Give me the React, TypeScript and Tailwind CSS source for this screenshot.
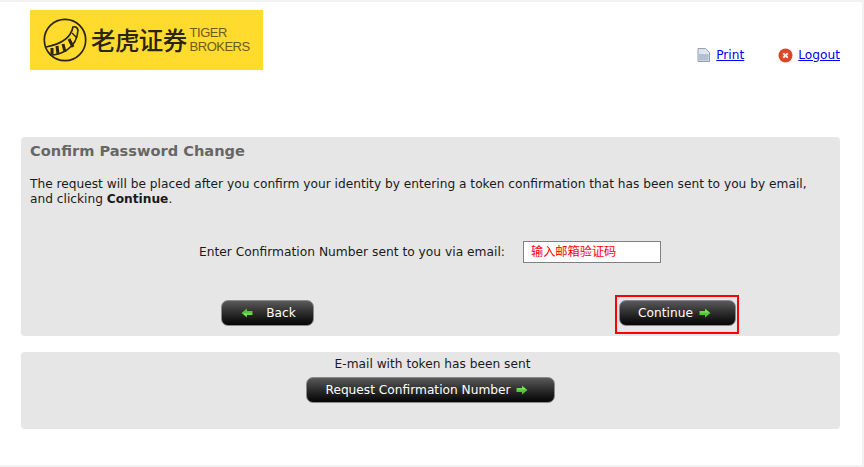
const font = "font-['DejaVu_Sans','Noto_Sans_CJK_SC',sans-serif]";

function GreenArrow({ left = false }: { left?: boolean }) {
    return (
        <svg width="12" height="10" viewBox="0 0 12 10" className={left ? 'rotate-180' : ''}>
            <path d="M0.5 3 H6 V0.5 L11.5 5 L6 9.5 V7 H0.5 Z" fill="#52c934" />
            <path d="M1 3.5 H6.5 V1.6 L10 4.6 H1 Z" fill="#86e863" />
        </svg>
    );
}

function DarkButton({ children, className }: { children: React.ReactNode; className: string }) {
    return (
        <button
            type="button"
            className={`flex h-[26px] items-center justify-center rounded-[7px] border border-[#8a8a8a] bg-gradient-to-b from-[#5a5a5a] to-[#060606] text-[12.2px] font-medium text-white ${className}`}
        >
            {children}
        </button>
    );
}

function TigerMark() {
    return (
        <svg width="44" height="44" viewBox="0 0 44 44" fill="none" stroke="#2b2410" strokeWidth="1.7">
            <circle cx="22" cy="22" r="20.7" />
            <path d="M7 37 C17 37 34 31 35 12 Q34 8 30 9 C28 19 19 26 3 29" strokeWidth="1.6" />
            <path d="M9 30 L9 36 M14 28 L15 36 M20 26 L22 34 M26 21 L30 29" strokeWidth="3" />
            <path d="M29 15 L34 20" strokeWidth="1.4" />
        </svg>
    );
}

export default function App() {
    return (
        <div className={`flex h-[467px] w-[864px] flex-col overflow-hidden border-t-2 border-r-2 border-b-2 border-[#f2f2f2] bg-white text-[12.2px] leading-[16px] text-[#1a1a1a] ${font}`}>
            <header className="flex h-[135px] items-start justify-between pl-[30px] pr-[22px] pt-2">
                <div className="flex h-[60px] w-[233px] items-center bg-[#fedb2d] pl-[13px] text-[#2b2410]">
                    <TigerMark />
                    <span className="ml-[4px] font-['Noto_Sans_CJK_SC',sans-serif] text-[24.5px] leading-none font-medium tracking-[-0.6px]">老虎证券</span>
                    <span className="ml-[3px] font-['Liberation_Sans',sans-serif] text-[13px] leading-[14px] tracking-[-0.5px] text-[#6b5c1a]">
                        TIGER
                        <br />
                        BROKERS
                    </span>
                </div>
                <nav className="mt-[37px] flex items-center gap-[34px]">
                    <a href="#" className="flex items-center gap-[6px] text-[#0000ee] underline">
                        <svg width="13" height="14" viewBox="0 0 13 14">
                            <path d="M1 0.5 H8.5 L12.5 4.5 V13.5 H1 Z" fill="#dfe5ee" stroke="#95a1b0" />
                            <path d="M2 6 H11.5 V12.5 H2 Z" fill="#b3c0d2" />
                        </svg>
                        Print
                    </a>
                    <a href="#" className="flex items-center gap-[5px] text-[#0000ee] underline">
                        <svg width="15" height="15" viewBox="0 0 15 15">
                            <circle cx="7.5" cy="7.5" r="7" fill="#dc4526" />
                            <path d="M5.2 5.2 L9.8 9.8 M9.8 5.2 L5.2 9.8" stroke="#ffe9e0" strokeWidth="2" />
                        </svg>
                        Logout
                    </a>
                </nav>
            </header>

            <main className="flex flex-col gap-4 pl-[21px] pr-[22px]">
                <section className="flex h-[199px] flex-col rounded-[4px] bg-[#e6e6e6] px-[9px] pt-[5px]">
                    <h1 className="text-[14.6px] leading-[17px] font-bold text-[#666666]">Confirm Password Change</h1>
                    <p className="mt-[18px] leading-[15px]">
                        The request will be placed after you confirm your identity by entering a token confirmation that has been sent to you by email,
                        <br />
                        and clicking <b>Continue</b>.
                    </p>
                    <div className="mt-[34px] flex h-[22px] items-center pl-[169px]">
                        <label className="w-[306px] text-[12.25px] whitespace-nowrap">Enter Confirmation Number sent to you via email:</label>
                        <div className="ml-[18px] flex h-[22px] w-[138px] items-center border border-[#808080] bg-white pl-[7px] text-[#ff0000]">输入邮箱验证码</div>
                    </div>
                    <div className="mt-[37px] flex items-start justify-between pl-[191px] pr-[92px]">
                        <DarkButton className="w-[93px] gap-[13px] pl-[2px]">
                            <GreenArrow left />
                            Back
                        </DarkButton>
                        <div className="-mt-[5px] h-[39px] w-[124px] border-2 border-[#ff0000] pt-[3px] pl-[2px]">
                            <DarkButton className="w-[117px] gap-[6px] pr-[6px]">
                                Continue
                                <GreenArrow />
                            </DarkButton>
                        </div>
                    </div>
                </section>

                <section className="flex h-[77px] flex-col items-center rounded-[4px] bg-[#e6e6e6] pt-[4px]">
                    <p className="pl-[4px]">E-mail with token has been sent</p>
                    <DarkButton className="mt-[5px] w-[249px] gap-[5px] pr-[8px]">
                        Request Confirmation Number
                        <GreenArrow />
                    </DarkButton>
                </section>
            </main>
        </div>
    );
}
